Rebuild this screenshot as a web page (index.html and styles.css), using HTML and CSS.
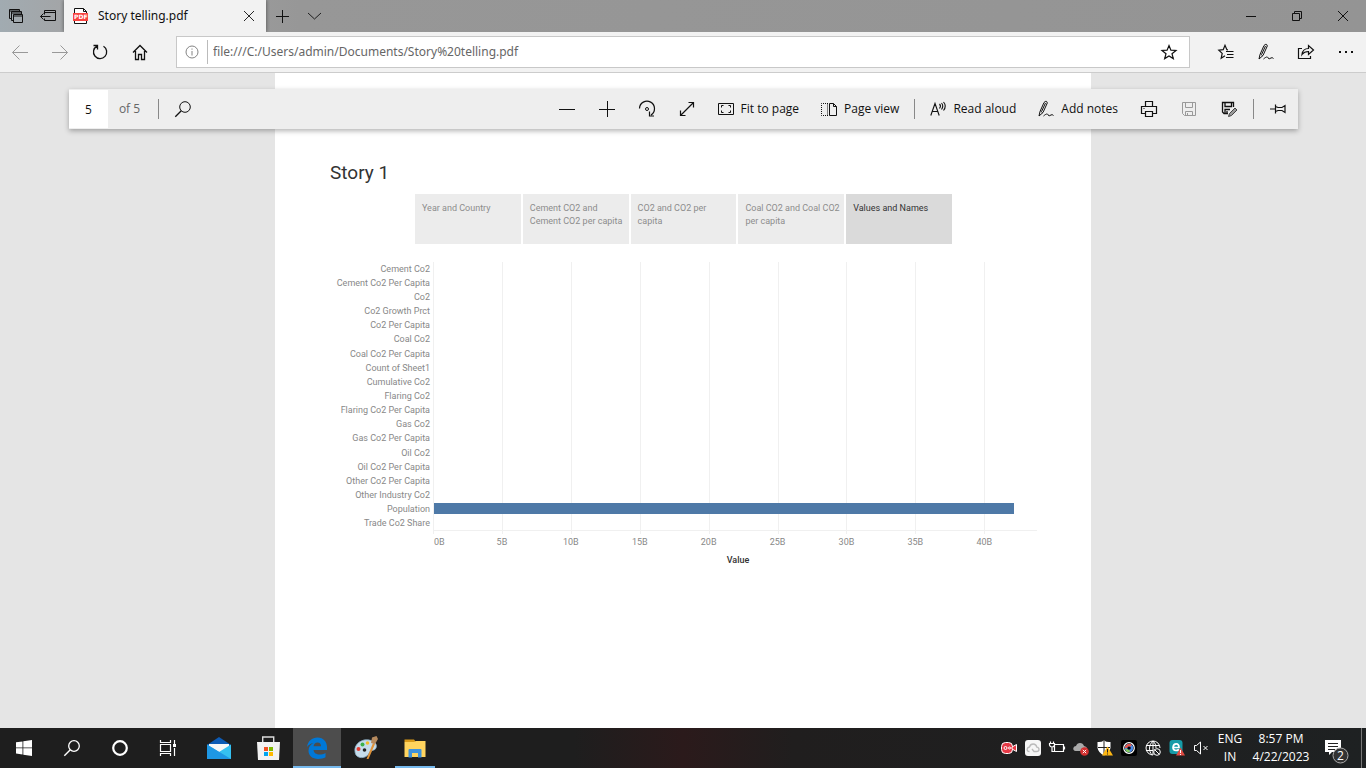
FILE: index.html
```html
<!DOCTYPE html>
<html lang="en">
<head>
<meta charset="utf-8">
<title>Story telling.pdf</title>
<link rel="stylesheet" href="styles.css">
</head>
<body>
<header class="titlebar">
  <button class="strip-btn" aria-label="Tabs you've set aside"><svg class="icon" viewBox="0 0 16 16"><path d="M3.500 10.500h-2v-9h10v2M1.500 3h10M5.500 12.500h-2v-9h10v3M3.500 5h10"/><path d="M5.500 6.500h9v8h-9zM5.500 8h9"/></svg></button>
  <button class="strip-btn" aria-label="Set these tabs aside"><svg class="icon" viewBox="0 0 16 16"><path d="M4.500 6.500v-4h11v10h-11v-2M4.500 4.500h11M.5 8.500h10M3.500 5.500l-3 3 3 3"/></svg></button>
  <div class="tab">
    <svg class="pdf" viewBox="0 0 16 16"><path d="M1.500.5h9l3 3v12h-12z" fill="#fff" stroke="#111"/><path d="M10.500.5v3h3" fill="none" stroke="#111"/><rect y="5" width="15" height="8" fill="#f8433f"/><text x="1" y="11" class="pdf-text">PDF</text></svg>
    <span class="tab-title">Story telling.pdf</span>
    <button class="tab-close" aria-label="Close tab"><svg class="icon thin" viewBox="0 0 16 16"><path d="M3 3l10 10M13 3L3 13"/></svg></button>
  </div>
  <button class="strip-btn" aria-label="New tab"><svg class="icon" viewBox="0 0 16 16"><path d="M8.500 2v13M2 8.500h13"/></svg></button>
  <button class="strip-btn" aria-label="Show tab previews"><svg class="icon thin" viewBox="0 0 16 16"><path d="M2 5l6.500 6L15 5"/></svg></button>
  <div class="window-controls">
    <button aria-label="Minimize"><svg class="icon" viewBox="0 0 16 16"><path d="M3 8.500h10"/></svg></button>
    <button aria-label="Restore"><svg class="icon" viewBox="0 0 16 16"><path d="M3.500 5.500h7v7h-7zM5.500 5V3.500h7v7H11"/></svg></button>
    <button aria-label="Close"><svg class="icon" viewBox="0 0 16 16"><path d="M3 3l10 10M13 3L3 13"/></svg></button>
  </div>
</header>

<nav class="navbar" aria-label="Browser">
  <button class="nav-btn" disabled aria-label="Back"><svg class="icon" viewBox="0 0 16 16"><path d="M.5 8.500H16M7.500 1.500l-7 7 7 7"/></svg></button>
  <button class="nav-btn" disabled aria-label="Forward"><svg class="icon" viewBox="0 0 16 16"><path d="M15.500 8.500H0M8.500 1.500l7 7-7 7"/></svg></button>
  <button class="nav-btn" aria-label="Refresh"><svg class="icon" viewBox="0 0 16 16"><path d="M11.500 2.300A6.600 6.600 0 1 1 5 2.100M1.500 1.500H5.500V5.500" stroke-width="1.300"/></svg></button>
  <button class="nav-btn" aria-label="Home"><svg class="icon" viewBox="0 0 16 16"><path d="M1 8.500L8 1.500l7 7M3.500 7v8.500h3v-5h3v5h3V7" stroke-width="1.300"/></svg></button>
  <div class="address">
    <button class="info" aria-label="Site information"><svg class="icon thin" viewBox="0 0 16 16"><circle cx="8" cy="8" r="6"/><path d="M8 7v4.500M8 4.500v1.200"/></svg></button>
    <input class="url" type="text" aria-label="Address" value="file:///C:/Users/admin/Documents/Story%20telling.pdf">
    <button class="nav-btn" aria-label="Add to favorites"><svg class="icon" viewBox="0 0 16 16"><path d="M8 1.500l1.900 4.700 5.100.3-4 3.200 1.300 4.900L8 11.900l-4.300 2.700L5 9.700 1 6.500l5.100-.3z" stroke-width="1.200"/></svg></button>
  </div>
  <button class="nav-btn" aria-label="Hub"><svg class="icon" viewBox="0 0 16 16"><path d="M10 5.800L8.900 5.700 7 1.300 5.200 5.700.8 6.200l3.400 3.200-1 4.800L7 11.700M8 7.500h7.500M9 10.500h6.500M8 13.500h7.500" stroke-width="1.200"/></svg></button>
  <button class="nav-btn" aria-label="Make a web note"><svg class="icon" viewBox="0 0 16 16"><path d="M1 15L2 10.500 6 1.500Q8.700-1.200 9.300 2L5 11.500 1 15M2.500 10l2 1.500M7.500 2L3.800 10M5.500 15C8.500 12.500 9.500 12.500 10 14q1 1.500 3 0 1-1 2.500.5"/></svg></button>
  <button class="nav-btn" aria-label="Share"><svg class="icon" viewBox="0 0 16 16"><path d="M4 4.500H.5v10h12V12M4 10.500C4.500 6.500 7 4.500 10.500 4.500V1.500l5 4.500-5 4.500v-3C7.500 7.500 5.500 8.500 4 10.500z" stroke-width="1.200"/></svg></button>
  <button class="nav-btn" aria-label="More"><svg class="icon solid" viewBox="0 0 16 16"><path d="M1 7h2v2H1zM7 7h2v2H7zM13 7h2v2h-2z"/></svg></button>
</nav>

<main class="viewer">
  <div class="toolbar" role="toolbar" aria-label="PDF tools">
    <input class="page-no" type="text" aria-label="Page number" value="5">
    <span class="page-count">of 5</span>
    <span class="sep"></span>
    <button class="tool" aria-label="Find"><svg class="icon" viewBox="0 0 16 16"><circle cx="10" cy="6" r="5.300"/><path d="M6.300 9.700L.3 15.700" stroke-width="1.300"/></svg></button>
    <div class="tools">
      <button class="tool" aria-label="Zoom out"><svg class="icon" viewBox="0 0 16 16"><path d="M0 8.500h16"/></svg></button>
      <button class="tool" aria-label="Zoom in"><svg class="icon" viewBox="0 0 16 16"><path d="M0 8.500h16M8.500 0v16"/></svg></button>
      <button class="tool" aria-label="Rotate"><svg class="icon" viewBox="0 0 16 16"><path d="M.5 7.500A7.500 7.500 0 1 1 12 14M10.500 10.500v4.500h4.500" stroke-width="1.200"/><circle cx="8" cy="8" r="1.500"/></svg></button>
      <button class="tool" aria-label="Full screen"><svg class="icon" viewBox="0 0 16 16"><path d="M1.500 14.500l13-13M9.500 1.500h5v5M1.500 9.500v5h5" stroke-width="1.200"/></svg></button>
      <button class="tool labelled"><svg class="icon" viewBox="0 0 16 16"><path d="M.5 2.500h15v11H.5zM3.500 6.500v-2h2M10.500 4.500h2v2M12.500 9.500v2h-2M5.500 11.500h-2v-2"/></svg>Fit to page</button>
      <button class="tool labelled"><svg class="icon" viewBox="0 0 16 16"><path d="M8.500 2.500h4l3 3v9h-7zM12.500 2.500v3h3"/><path d="M7 2.500H.5v12H7M6.500 2.500v12" stroke-dasharray="1 1"/></svg>Page view</button>
      <span class="sep"></span>
      <button class="tool labelled"><svg class="icon" viewBox="0 0 16 16"><path d="M.8 14.500L5 2.500l4.200 12M2.300 10.500h5.400M9.500 3q2 2 0 4.500M11.500 2q2.500 3 0 6.500M13.500 1q3.500 4 0 8.500" stroke-width="1.100"/></svg>Read aloud</button>
      <button class="tool labelled"><svg class="icon" viewBox="0 0 16 16"><path d="M1 15L2 10.500 6 1.500Q8.700-1.200 9.300 2L5 11.500 1 15M2.500 10l2 1.500M7.500 2L3.800 10M5.500 15C8.500 12.500 9.500 12.500 10 14q1 1.500 3 0 1-1 2.500.5"/></svg>Add notes</button>
      <button class="tool" aria-label="Print"><svg class="icon" viewBox="0 0 16 16"><path d="M4.500 5.500v-5h7v5M4.500 12.500h-4v-7h15v7h-4M4.500 10.500h7v5h-7zM2.500 7.500h1" stroke-width="1.200"/></svg></button>
      <button class="tool" disabled aria-label="Save"><svg class="icon" viewBox="0 0 16 16"><path d="M1.500 1.500h13v13h-11l-2-2zM4.500 1.500v5h7v-5M4.500 14.500v-4h7v4M6.500 12v2.500"/></svg></button>
      <button class="tool" aria-label="Save as"><svg class="icon" viewBox="0 0 16 16"><path d="M7 12.500H3L1.500 11V1.500h11V6M4 1.500v4h6.500v-4M4 12.500v-4h5M6 10v2.500" stroke-width="1.300"/><path d="M7.500 15.500l1-3 5.500-5.500 2 2-5.500 5.500z" fill="#999" stroke="#444"/></svg></button>
      <span class="sep"></span>
      <button class="tool" aria-label="Unpin toolbar"><svg class="icon" viewBox="0 0 16 16"><path d="M0 8h5.500M5.500 3.500v9M5.500 5.500L8 6.500h4l3-2v7l-3-2H8l-2.500 1" stroke-width="1.200"/></svg></button>
    </div>
  </div>

  <article class="page">
    <h1 class="story-title">Story 1</h1>
    <div class="story-points">
      <button class="point">Year and Country</button>
      <button class="point">Cement CO2 and Cement CO2 per capita</button>
      <button class="point">CO2 and CO2 per capita</button>
      <button class="point">Coal CO2 and Coal CO2 per capita</button>
      <button class="point current">Values and Names</button>
    </div>
    <div class="chart">
      <ul class="names">
        <li>Cement Co2</li><li>Cement Co2 Per Capita</li><li>Co2</li><li>Co2 Growth Prct</li><li>Co2 Per Capita</li><li>Coal Co2</li><li>Coal Co2 Per Capita</li><li>Count of Sheet1</li><li>Cumulative Co2</li><li>Flaring Co2</li><li>Flaring Co2 Per Capita</li><li>Gas Co2</li><li>Gas Co2 Per Capita</li><li>Oil Co2</li><li>Oil Co2 Per Capita</li><li>Other Co2 Per Capita</li><li>Other Industry Co2</li><li>Population</li><li>Trade Co2 Share</li>
      </ul>
      <div class="plot">
        <div class="gridlines"><i></i><i></i><i></i><i></i><i></i><i></i><i></i><i></i><i></i></div>
        <div class="bars"><div class="bar" style="width:96%"></div></div>
      </div>
      <div class="ticks"><span>0B</span><span>5B</span><span>10B</span><span>15B</span><span>20B</span><span>25B</span><span>30B</span><span>35B</span><span>40B</span></div>
      <div class="axis-title">Value</div>
    </div>
  </article>
</main>

<footer class="taskbar">
  <button class="task" aria-label="Start"><svg class="icon solid" viewBox="0 0 16 16"><path d="M0 2.300l6.500-.9v6.100H0zM7.300 1.300L16 0v7.500H7.300zM0 8.300h6.500v6.200L0 13.600zM7.300 8.300H16V16l-8.700-1.300z"/></svg></button>
  <button class="task" aria-label="Search"><svg class="icon" viewBox="0 0 16 16"><circle cx="10" cy="6" r="5.300" stroke-width="1.300"/><path d="M6.300 9.700L.3 15.700" stroke-width="1.400"/></svg></button>
  <button class="task" aria-label="Cortana"><svg class="icon" viewBox="0 0 16 16"><circle cx="8" cy="8" r="6.800" stroke-width="2.200"/></svg></button>
  <button class="task" aria-label="Task view"><svg class="icon" viewBox="0 0 16 16"><path d="M.5 0v2.500h10V0M.5 4.500h10v7H.5zM.5 16v-2.500h10V16M14.500 0v4M14.500 8v8" stroke-width="1.200"/><path d="M13 4h3v3h-3z" fill="currentColor" stroke="none"/></svg></button>
  <div class="apps">
    <button class="task" aria-label="Mail"><svg class="app" viewBox="0 0 24 24"><path d="M0 9L12 1l12 8v3H0z" fill="#0d5bb5"/><path d="M2 8h20v8H2z" fill="#f7f7f7"/><path d="M0 8.500L12 16 24 8.500V23H0z" fill="#35c1f1"/><path d="M0 8.500L24 23H0z" fill="#1e97e4"/></svg></button>
    <button class="task" aria-label="Store"><svg class="app" viewBox="0 0 24 24"><path d="M6.700 6V1h11v5" fill="none" stroke="#ddd" stroke-width="1.400"/><path d="M1 6h23l-1 18H2z" fill="#f2f2f2"/><path d="M8 11h4v4H8z" fill="#f25022"/><path d="M13 11h4v4h-4z" fill="#7fba00"/><path d="M8 16h4v4H8z" fill="#00a4ef"/><path d="M13 16h4v4h-4z" fill="#ffb900"/></svg></button>
    <button class="task active" aria-label="Microsoft Edge"><svg class="app" viewBox="0 0 24 24"><path d="M2 11C3 5 7 1.500 12.500 1.500c6 0 9.500 4.500 9.500 9.500v3H8.500c.3 3 3 4.500 6 4.500 2.300 0 4.300-.6 6-1.600v4.300c-2 1.100-4.500 1.700-7.500 1.700-5.500 0-9.500-3.300-9.500-8.200 0-3.700 2-6.300 5-7.700C5.500 7.500 3.500 9 2 11zM8.500 10.200H16C16 8 15 6.500 12.500 6.500c-2.200 0-3.600 1.600-4 3.700z" fill="#0078d7"/></svg></button>
    <button class="task" aria-label="Paint"><svg class="app" viewBox="0 0 24 24"><path d="M2 19C-1 13 2 6 10 4c8-1 14 3 12 8-1 3-6 2-7 5-1 4-9 7-13 2z" fill="#c5dceb" stroke="#8fb4cc" stroke-width=".8"/><circle cx="4.500" cy="13" r="2" fill="#e33b32"/><circle cx="8.500" cy="8.500" r="2" fill="#3bb14a"/><circle cx="13.500" cy="7" r="1.800" fill="#f2bb2b"/><circle cx="10.500" cy="14" r="1.800" fill="#222"/><path d="M12.500 23l6.500-16 2 1-6.500 15z" fill="#df9238"/><path d="M17 7l1-5.500 4.500-1.500L24 3l-3 5z" fill="#b68a5e"/></svg></button>
    <button class="task running" aria-label="File Explorer"><svg class="app" viewBox="0 0 24 24"><path d="M1.500 3.500H11l2 2.500h-11.500z" fill="#d99a19"/><path d="M1.500 6H11l2-1h9.500v16h-21z" fill="#ffd45e"/><path d="M5.500 21.500V14q0-1 1-1h11q1 0 1 1v7.500h-3.500V17h-6v4.500z" fill="#3e92dc"/></svg></button>
  </div>
  <div class="tray">
    <button aria-label="Screen recorder"><svg class="icon" viewBox="0 0 16 16"><rect x=".5" y="2.500" width="11" height="11" rx="4" fill="#e63946" stroke="#fff"/><path d="M11 7l4.500-2.500v7L11 9z" fill="#e63946" stroke="#fff"/><circle cx="4.500" cy="8" r="1.500" stroke="#fff"/><circle cx="8.500" cy="8" r="1" stroke="#fff"/></svg></button>
    <button aria-label="Cloud sync"><svg class="icon" viewBox="0 0 16 16"><rect width="16" height="16" rx="3" fill="#f6f6f6" stroke="none"/><path d="M4.500 11.500q-2.500 0-2.300-2.300Q2.500 7.300 4.500 7q.8-3 3.700-3 3 0 3.600 3.200 2.200.3 2.200 2.200 0 2-2.500 2.100H9l-2-2.500" stroke="#bbb" stroke-width="1.300"/></svg></button>
    <button aria-label="Battery"><svg class="icon" viewBox="0 0 16 16"><path d="M5.500 4.500h9v7h-9zM15.500 6.500v3M1.500 1.500v2M4.500 1.500v2M.5 3.500h5v1.500q-.5 2-2.500 2-2 0-2.500-2zM3 7v4.500h2.500" stroke-width="1.200"/></svg></button>
    <button aria-label="OneDrive"><svg class="icon" viewBox="0 0 16 16"><path d="M2.500 11Q0 10.500.3 8 1 6 3 6q1-3 4-3 3 0 4 3 3 .5 3 3 0 2-2 2z" fill="#aaa" stroke="none"/><circle cx="11.500" cy="11.500" r="4.300" fill="#d32f2f" stroke="none"/><path d="M9.800 9.800l3.400 3.400M13.200 9.800l-3.400 3.400" stroke="#fff"/></svg></button>
    <button aria-label="Security"><svg class="icon" viewBox="0 0 16 16"><path d="M7 .5q3 2 6.500 1.500V8q-1 5-6.500 7.500Q1.500 13 .5 8V2Q4 2.500 7 .5z" fill="#fff" stroke="none"/><path d="M7 1v14M1 7.500h12" stroke="#222"/><path d="M10.500 6.500L16 15.500H5z" fill="#fdb714" stroke="none"/><path d="M10.500 9v3.500M10.500 13.500v1" stroke="#222"/></svg></button>
    <button aria-label="Camera"><svg class="icon" viewBox="0 0 16 16"><rect width="16" height="16" rx="2" fill="#000" stroke="none"/><circle cx="8" cy="8" r="5.300" stroke="#fff" stroke-width="1.200"/><circle cx="8" cy="8" r="3" stroke="#4b8bea" stroke-width="2.400"/><path d="M5 8a3 3 0 0 1 5-2.200" stroke="#e7564b" stroke-width="2.400"/><path d="M5.200 9a3 3 0 0 0 3.500 2" stroke="#82c85a" stroke-width="2.400"/></svg></button>
    <button aria-label="Network"><svg class="icon" viewBox="0 0 16 16"><path d="M15 8A7 7 0 1 0 8 15M8 1C3.500 5 3.500 11 7 15M8 1c2 2 3 4 3 7M1 5.500h13.500M1 10.500h7M8 1v14"/><circle cx="12" cy="12" r="3.300"/><path d="M9.800 9.800l4.400 4.400"/></svg></button>
    <button aria-label="Antivirus"><svg class="icon" viewBox="0 0 16 16"><rect x=".5" width="13" height="14" rx="3" fill="#169ca8" stroke="none"/><path d="M4.500 7.500h5.500Q10 3.800 7.200 3.800T4 7.300q0 3.200 3 3.200 1.700 0 3-1" stroke="#fff" stroke-width="1.700"/><path d="M11.500 7.500L16 15.500H7z" fill="#e14a42" stroke="none"/><path d="M11.500 10v3M11.500 14v1" stroke="#fff"/></svg></button>
    <button aria-label="Volume muted"><svg class="icon" viewBox="0 0 16 16"><path d="M1.500 5.500v5h2l4 3.500V2l-4 3.500zM10.500 6l4 4M14.500 6l-4 4"/></svg></button>
    <button class="lang"><span>ENG</span><span>IN</span></button>
    <button class="clock"><span>8:57 PM</span><span>4/22/2023</span></button>
    <button class="notice" aria-label="2 notifications"><svg viewBox="0 0 26 26"><path d="M0 1h16v12H7l-3 3v-3H0z" fill="#fff"/><path d="M3 4.500h10M3 7.500h10M3 10.500h7" stroke="#222"/><circle cx="15.500" cy="16.500" r="7.500" fill="#333" stroke="#aaa"/><text x="15.500" y="21" class="badge">2</text></svg></button>
    <span class="desktop-edge"></span>
  </div>
</footer>
</body>
</html>
```
FILE: styles.css
```css
* { box-sizing: border-box; }

body {
  margin: 0;
  height: 100vh;
  display: flex;
  flex-direction: column;
  overflow: hidden;
  font: 12px/16px "Open Sans", "Noto Sans", sans-serif;
  color: #111;
}

button, input { font: inherit; color: inherit; border: 0; padding: 0; background: none; }

button { display: flex; align-items: center; justify-content: center; }

.icon {
  width: 16px;
  height: 16px;
  flex: none;
  fill: none;
  stroke: currentColor;
  overflow: visible;
}
.icon.thin { stroke-width: 0.9; }
.icon.solid { fill: currentColor; stroke: none; }

/* Tab strip */
.titlebar {
  display: flex;
  height: 32px;
  flex: none;
  background: linear-gradient(90deg, #a1abb1 0, #a3a5a7 64px, #979797 300px, #949494);
}
.strip-btn { width: 32px; }
.tab {
  display: flex;
  align-items: center;
  width: 202px;
  padding-left: 9px;
  background: #f2f2f2;
  box-shadow: 0 0 4px rgba(0, 0, 0, 0.5);
  clip-path: inset(0 -4px);
}
.pdf { width: 16px; height: 16px; }
.pdf-text { font: bold 6px "DejaVu Sans", sans-serif; fill: #fff; }
.tab-title { flex: 1; margin-left: 9px; font-family: "Noto Sans", sans-serif; }
.tab-close { width: 34px; height: 32px; }
.window-controls { display: flex; margin-left: auto; }
.window-controls button { width: 46px; }

/* Address row */
.navbar {
  display: flex;
  align-items: center;
  height: 41px;
  flex: none;
  background: #f2f2f2;
  border-bottom: 1px solid #ccc;
}
.nav-btn { width: 40px; height: 40px; }
.nav-btn:disabled { color: #999; }
.address {
  display: flex;
  align-items: center;
  flex: 1;
  height: 32px;
  margin: 0 16px;
  background: #fff;
  border: 1px solid #c8c8c8;
}
.info { width: 31px; height: 24px; border-right: 1px solid #bbb; color: #767676; }
.url { flex: 1; min-width: 0; padding-left: 5px; color: #666; font-family: "Noto Sans", sans-serif; }

/* PDF viewer */
.viewer {
  position: relative;
  display: flex;
  justify-content: center;
  flex: 1;
  min-height: 0;
  background: #e5e5e5;
}
.toolbar {
  position: absolute;
  top: 16px;
  left: 69px;
  right: 68px;
  display: flex;
  align-items: center;
  height: 40px;
  background: #eee;
  box-shadow: 0 2px 5px rgba(0, 0, 0, 0.3);
}
.page-no { width: 39px; height: 38px; background: #fff; text-align: center; }
.page-count { width: 46px; padding-right: 3px; text-align: center; color: #666; }
.sep { width: 1px; height: 20px; margin: 0 4px; background: #888; }
.tool { width: 40px; height: 40px; }
.tool:disabled { color: #999; }
.tools { display: flex; align-items: center; margin-left: auto; }
.labelled { width: auto; padding: 0 11px; gap: 7px; white-space: nowrap; }

.page {
  flex: 0 1 816px;
  padding: 88px 54px 0 55px;
  background: #fff;
  font-family: Roboto, "Open Sans", sans-serif;
  font-size: 9px;
  line-height: 13px;
}
.story-title { margin: 0; font-size: 19px; line-height: 24px; font-weight: 400; color: #333; }
.story-points {
  display: grid;
  grid-template-columns: repeat(5, 1fr);
  gap: 2px;
  margin: 9px 85px 18px;
}
.point {
  align-items: flex-start;
  justify-content: flex-start;
  min-height: 50px;
  padding: 8px 4px 8px 7px;
  text-align: left;
  background: #ececec;
  color: #8c8c8c;
}
.point.current { background: #dadada; color: #333; }

.chart { display: grid; grid-template-columns: 100px 1fr; column-gap: 3px; color: #888; }
.names {
  display: grid;
  grid-template-rows: repeat(19, 1fr);
  align-items: center;
  height: 269px;
  margin: 0;
  padding: 0;
  list-style: none;
  text-align: right;
  white-space: nowrap;
}
.plot { display: grid; grid-template-rows: 1fr 3px; margin-bottom: -3px; }
.gridlines {
  grid-area: 1 / 1 / 3 / 2;
  display: grid;
  grid-template-columns: repeat(8, 689fr) 528fr;
}
.gridlines i { border-left: 1px solid #f0f0f0; }
.bars {
  grid-area: 1 / 1;
  display: grid;
  grid-template-rows: repeat(19, 1fr);
  align-items: center;
  border-bottom: 1px solid #f0f0f0;
}
.bar { grid-row: 18; height: 11px; margin-left: 1px; background: #4e79a7; }
.ticks {
  grid-column: 2;
  display: grid;
  grid-template-columns: 345fr repeat(8, 689fr) 183fr;
  margin-top: 5px;
  text-align: center;
}
.ticks span:first-child { text-align: left; padding-left: 1px; }
.axis-title { grid-column: 2; margin-top: 5px; padding-left: 6px; text-align: center; color: #333; font-weight: 500; }

/* Taskbar */
.taskbar {
  display: flex;
  height: 40px;
  flex: none;
  color: #fff;
  background: linear-gradient(90deg, #1e1e1e 0, #1e1e1e 42%, #2b1a1b 50%, #201e1e 58%, #1e2122);
}
.task { width: 48px; height: 40px; }
.apps { display: flex; gap: 1px; margin-left: 3px; }
.app { width: 24px; height: 24px; flex: none; }
.task.active { background: #4d4d4d; border-bottom: 2px solid #76b9ed; padding-top: 2px; }
.task.running { background: linear-gradient(#76b9ed, #76b9ed) center bottom / 40px 2px no-repeat; }
.tray { display: flex; margin-left: auto; }
.tray button { width: 24px; }
.tray .lang, .tray .clock { width: 34px; flex-direction: column; line-height: 18px; }
.tray .clock { width: 68px; }
.tray .notice { width: 46px; }
.notice svg { width: 26px; height: 26px; flex: none; margin-top: 8px; }
.badge { font: 12px "Open Sans", sans-serif; fill: #fff; text-anchor: middle; }
.desktop-edge { width: 5px; border-left: 1px solid #777; }
```
